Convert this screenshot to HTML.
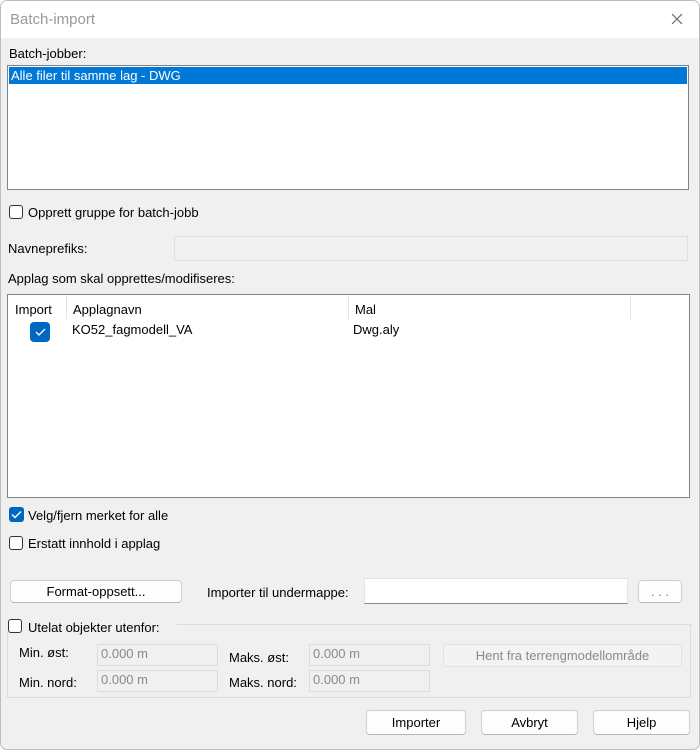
<!DOCTYPE html>
<html><head><meta charset="utf-8"><style>
*{box-sizing:border-box;margin:0;padding:0}
body{width:700px;height:750px;background:#fff;font-family:"Liberation Sans",sans-serif;font-size:13px;color:#000;position:relative;overflow:hidden}
.win{position:absolute;left:0;top:0;width:700px;height:750px;background:#f0f0f0;border-radius:7px;overflow:hidden;box-shadow:inset 0 0 0 1px #bdbdbd}
.title{position:absolute;left:1px;top:1px;width:698px;height:37px;background:#fff;border-radius:6px 6px 0 0}
.a{position:absolute;white-space:nowrap}
.cb{position:absolute;width:14px;height:14px;border:1px solid #333;border-radius:3px;background:#fff}
.cbc{position:absolute;width:15px;height:15px;border-radius:3px;background:#0067c0}
.cbc svg{position:absolute;left:2px;top:3px}
.btn{position:absolute;background:#fdfdfd;border:1px solid #d0d0d0;border-bottom-color:#b8b8b8;border-radius:4px;text-align:center;line-height:21px}
.fld{position:absolute;background:#f0f0f0;border:1px solid #dcdcdc;color:#8a8a8a;padding-left:3px;line-height:18px}
</style></head><body>
<div class="win">
<div class="title"></div>
<div class="a" style="left:10px;top:11px;font-size:15px;color:#999">Batch-import</div>
<svg style="position:absolute;left:671px;top:13px" width="12" height="12"><path d="M1 1L11 11M11 1L1 11" stroke="#666" stroke-width="1.2"/></svg>

<div class="a" style="left:9px;top:46px">Batch-jobber:</div>
<div style="position:absolute;left:7px;top:65px;width:682px;height:125px;background:#fff;border:1px solid #828282"></div>
<div style="position:absolute;left:9px;top:67px;width:678px;height:17px;background:#0078d7"></div>
<div class="a" style="left:11px;top:68px;color:#fff">Alle filer til samme lag - DWG</div>

<div class="cb" style="left:9px;top:205px"></div>
<div class="a" style="left:28px;top:205px">Opprett gruppe for batch-jobb</div>

<div class="a" style="left:8px;top:241px">Navneprefiks:</div>
<div style="position:absolute;left:174px;top:236px;width:514px;height:25px;background:#f0f0f0;border:1px solid #dedede"></div>

<div class="a" style="left:8px;top:271px">Applag som skal opprettes/modifiseres:</div>
<div style="position:absolute;left:7px;top:294px;width:683px;height:204px;background:#fff;border:1px solid #828282"></div>
<div style="position:absolute;left:66px;top:296px;width:1px;height:23px;background:#e3e3e3"></div>
<div style="position:absolute;left:348px;top:296px;width:1px;height:23px;background:#e3e3e3"></div>
<div style="position:absolute;left:630px;top:296px;width:1px;height:23px;background:#e3e3e3"></div>
<div class="a" style="left:15px;top:302px">Import</div>
<div class="a" style="left:73px;top:302px">Applagnavn</div>
<div class="a" style="left:355px;top:302px">Mal</div>
<div style="position:absolute;left:30px;top:322px;width:20px;height:20px;border-radius:4px;background:#0067c0"><svg style="position:absolute;left:5px;top:6px" width="11" height="8"><path d="M1 4L4 7L10 1" stroke="#fff" stroke-width="1.3" fill="none"/></svg></div>
<div class="a" style="left:72px;top:322px">KO52_fagmodell_VA</div>
<div class="a" style="left:353px;top:322px">Dwg.aly</div>

<div class="cbc" style="left:9px;top:507px"><svg width="11" height="9"><path d="M1 4.5L4 7.5L10 1.5" stroke="#fff" stroke-width="1.4" fill="none"/></svg></div>
<div class="a" style="left:28px;top:508px">Velg/fjern merket for alle</div>
<div class="cb" style="left:9px;top:536px"></div>
<div class="a" style="left:28px;top:536px">Erstatt innhold i applag</div>

<div class="btn" style="left:10px;top:580px;width:172px;height:23px">Format-oppsett...</div>
<div class="a" style="left:207px;top:585px">Importer til undermappe:</div>
<div style="position:absolute;left:364px;top:578px;width:264px;height:26px;background:#fff;border:1px solid #e2e2e2;border-bottom:1px solid #8a8a8a"></div>
<div class="btn" style="left:638px;top:580px;width:44px;height:23px;color:#777">. . .</div>

<div style="position:absolute;left:7px;top:624px;width:684px;height:74px;border:1px solid #dcdcdc"></div>
<div style="position:absolute;left:7px;top:617px;width:170px;height:15px;background:#f0f0f0"></div>
<div class="cb" style="left:8px;top:619px"></div>
<div class="a" style="left:28px;top:620px">Utelat objekter utenfor:</div>

<div class="a" style="left:19px;top:645px">Min. øst:</div>
<div class="fld" style="left:97px;top:644px;width:121px;height:22px">0.000 m</div>
<div class="a" style="left:229px;top:650px">Maks. øst:</div>
<div class="fld" style="left:309px;top:644px;width:121px;height:22px">0.000 m</div>
<div class="btn" style="left:443px;top:644px;width:239px;height:23px;background:#f3f3f3;border-color:#e2e2e2;color:#8a8a8a">Hent fra terrengmodellområde</div>
<div class="a" style="left:19px;top:675px">Min. nord:</div>
<div class="fld" style="left:97px;top:670px;width:121px;height:22px">0.000 m</div>
<div class="a" style="left:229px;top:675px">Maks. nord:</div>
<div class="fld" style="left:309px;top:670px;width:121px;height:22px">0.000 m</div>

<div class="btn" style="left:366px;top:710px;width:100px;height:25px;line-height:23px">Importer</div>
<div class="btn" style="left:481px;top:710px;width:97px;height:25px;line-height:23px">Avbryt</div>
<div class="btn" style="left:593px;top:710px;width:97px;height:25px;line-height:23px">Hjelp</div>
</div>
</body></html>
